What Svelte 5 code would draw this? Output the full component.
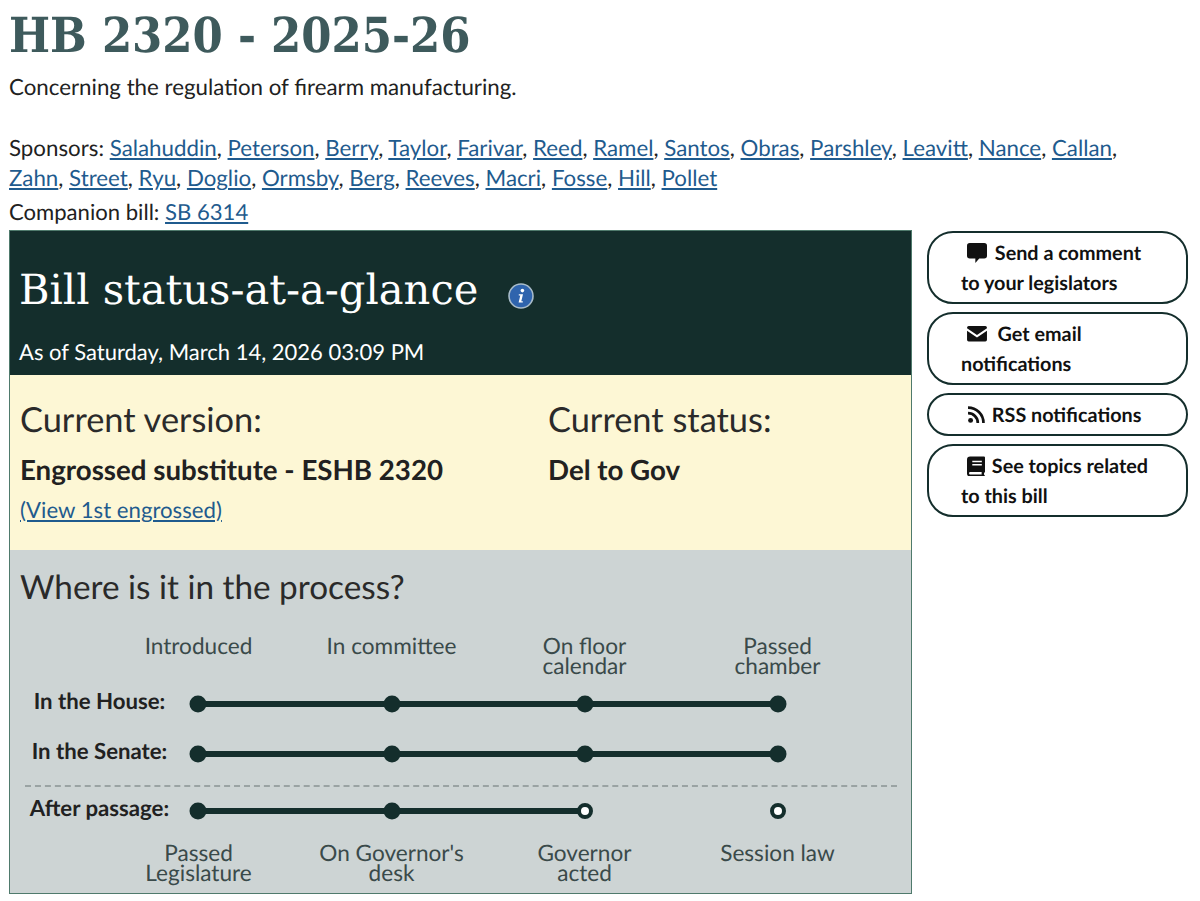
<script>
    let sponsors = ["Salahuddin","Peterson","Berry","Taylor","Farivar","Reed","Ramel","Santos","Obras","Parshley","Leavitt","Nance","Callan","Zahn","Street","Ryu","Doglio","Ormsby","Berg","Reeves","Macri","Fosse","Hill","Pollet"];
    let topStages = [["Introduced"],["In committee"],["On floor","calendar"],["Passed","chamber"]];
    let bottomStages = [["Passed","Legislature"],["On Governor's","desk"],["Governor","acted"],["Session law"]];
    const xs = [9, 203, 396, 589];
</script>

<div class="page">
    <h1>HB 2320 - 2025-26</h1>
    <p class="desc">Concerning the regulation of firearm manufacturing.</p>
    <p class="sponsors">Sponsors: {#each sponsors as s, i}<a href="#top">{s}</a>{i < sponsors.length - 1 ? ", " : ""}{/each}</p>
    <p class="companion">Companion bill: <a href="#top">SB 6314</a></p>

    <div class="columns">
        <div class="status">
            <div class="head">
                <div class="head-title">
                    <h2>Bill status-at-a-glance</h2>
                    <svg class="info" viewBox="0 0 26 26" width="26" height="26">
                        <circle cx="13" cy="13" r="12" fill="#2f64ad" stroke="#a9bcc9" stroke-width="1.6" />
                        <circle cx="14.4" cy="7.6" r="1.8" fill="#fff" />
                        <path d="M10.8 11.2h4.2l-1.7 7h1.5v1.4h-4.2l1.7-7h-1.5z" fill="#fff" />
                    </svg>
                </div>
                <div class="asof">As of Saturday, March 14, 2026 03:09 PM</div>
            </div>

            <div class="current">
                <div class="cur-version">
                    <h3>Current version:</h3>
                    <div class="strong">Engrossed substitute - ESHB 2320</div>
                    <a class="view" href="#top">(View 1st engrossed)</a>
                </div>
                <div class="cur-status">
                    <h3>Current status:</h3>
                    <div class="strong">Del to Gov</div>
                </div>
            </div>

            <div class="process">
                <h3>Where is it in the process?</h3>
                <div class="stages top">
                    {#each topStages as st}
                        <div class="stage">{#each st as l}<div>{l}</div>{/each}</div>
                    {/each}
                </div>
                <div class="row house">
                    <div class="row-label">In the House:</div>
                    <svg class="track" width="620" height="24">
                        <line x1="9" y1="12" x2="589" y2="12" />
                        {#each xs as x}<circle cx={x} cy="12" r="8.5" />{/each}
                    </svg>
                </div>
                <div class="row senate">
                    <div class="row-label">In the Senate:</div>
                    <svg class="track" width="620" height="24">
                        <line x1="9" y1="12" x2="589" y2="12" />
                        {#each xs as x}<circle cx={x} cy="12" r="8.5" />{/each}
                    </svg>
                </div>
                <div class="divider"></div>
                <div class="row after">
                    <div class="row-label">After passage:</div>
                    <svg class="track" width="620" height="24">
                        <line x1="9" y1="12" x2="396" y2="12" />
                        <circle cx="9" cy="12" r="8.5" />
                        <circle cx="203" cy="12" r="8.5" />
                        <circle class="open" cx="396" cy="12" r="6" />
                        <circle class="open" cx="589" cy="12" r="6" />
                    </svg>
                </div>
                <div class="stages bottom">
                    {#each bottomStages as st}
                        <div class="stage">{#each st as l}<div>{l}</div>{/each}</div>
                    {/each}
                </div>
            </div>
        </div>

        <div class="actions">
            <a class="btn" href="#top">
                <span class="line first">
                    <svg viewBox="1 1 18 18" width="20" height="20"><path d="M3.5 1h13A2.5 2.5 0 0 1 19 3.500v9a2.500 2.500 0 0 1-2.500 2.500H12l-3.500 4v-4h-5A2.500 2.500 0 0 1 1 12.500v-9A2.500 2.500 0 0 1 3.500 1z" /></svg>
                    Send a comment
                </span>
                <span class="line">to your legislators</span>
            </a>
            <a class="btn" href="#top">
                <span class="line first">
                    <svg class="mail" viewBox="1 3 18 14" width="20" height="15.500"><path d="M2.500 3h15A1.500 1.500 0 0 1 19 4.500v.6l-9 6-9-6v-.6A1.500 1.500 0 0 1 2.500 3z" /><path d="M1 7.400V15.500A1.500 1.500 0 0 0 2.500 17h15a1.500 1.500 0 0 0 1.500-1.500V7.400l-9 6z" /></svg>
                    &nbsp;Get email
                </span>
                <span class="line">notifications</span>
            </a>
            <a class="btn single" href="#top">
                <span class="line first">
                    <svg viewBox="1 1.500 17.500 17.500" width="18" height="18" class="rss"><circle cx="4.500" cy="15.500" r="2.400" fill="#111" stroke="none" /><path d="M2 8.500a9.500 9.500 0 0 1 9.500 9.500" /><path d="M2 3a15 15 0 0 1 15 15" /></svg>
                    RSS notifications
                </span>
            </a>
            <a class="btn" href="#top">
                <span class="line first">
                    <svg class="book" viewBox="1 1 17 18" width="18" height="20"><path fill-rule="evenodd" d="M4 1h13a1 1 0 0 1 1 1v13.500a1 1 0 0 1-.7.9c-.3.7-.3 1.500 0 2.100.4.200.7.500.7.800a.8.800 0 0 1-.8.700H4a3 3 0 0 1-3-3V4a3 3 0 0 1 3-3zM6 5v1.500h9V5zm0 3v1.500h9V8zM4 15.600c-1.400 0-1.400 2.400 0 2.400h10.900a6 6 0 0 1 0-2.400z" /></svg>
                    See topics related
                </span>
                <span class="line">to this bill</span>
            </a>
        </div>
    </div>
</div>

<style>
    :global(body) {
        background: #fff;
        color: #212121;
        font-family: Lato, sans-serif;
        text-rendering: geometricPrecision;
    }

    .page {
        padding: 0 9px;
        height: 901px;
        overflow: hidden;
        box-sizing: border-box;
    }

    h1 {
        font-family: "DejaVu Serif Condensed", "DejaVu Serif", serif;
        font-weight: 700;
        font-size: 48.3px;
        line-height: 60px;
        color: #3e5a5c;
        margin: 6px 0 0;
    }

    p {
        margin: 0;
    }

    .desc {
        font-size: 22.3px;
        line-height: 30px;
        margin-top: 6px;
    }

    .sponsors {
        font-size: 22.3px;
        line-height: 30px;
        margin-top: 31px;
        width: 1130px;
    }

    .companion {
        font-size: 22.1px;
        line-height: 30px;
        margin-top: 4px;
    }

    a {
        color: #1f5b8e;
        text-decoration: underline;
    }

    .columns {
        display: flex;
        align-items: flex-start;
        gap: 15px;
        margin-top: 3px;
    }

    .status {
        width: 903px;
        box-sizing: border-box;
        border: 1px solid #4f7a6c;
        flex: none;
    }

    .head {
        background: #142e2c;
        color: #fff;
        height: 144px;
        padding: 0 9px;
        box-sizing: border-box;
        overflow: hidden;
    }

    .head-title {
        display: flex;
        align-items: center;
        gap: 30px;
        margin-top: 29px;
    }

    h2 {
        font-family: "DejaVu Serif", serif;
        font-weight: 400;
        font-size: 41.6px;
        line-height: 60px;
        margin: 0;
    }

    .info {
        margin-top: 11px;
    }

    .asof {
        font-size: 22px;
        line-height: 30px;
        margin-top: 17px;
    }

    .current {
        background: #fdf7d5;
        height: 175px;
        padding: 24px 10px 0 10px;
        box-sizing: border-box;
        display: flex;
    }

    .cur-version {
        width: 528px;
    }

    h3 {
        font-weight: 400;
        font-size: 34.4px;
        line-height: 42px;
        margin: 0;
        color: #2a2a2a;
    }

    .process h3 {
        font-size: 33.3px;
    }

    .strong {
        font-weight: 700;
        font-size: 27.7px;
        line-height: 36px;
        margin-top: 11px;
    }

    .view {
        display: block;
        font-size: 22.2px;
        line-height: 30px;
        margin-top: 7px;
    }

    .process {
        background: #cdd4d4;
        padding: 16px 14px 8px 10px;
        height: 343px;
        box-sizing: border-box;
    }

    .stages {
        display: grid;
        grid-template-columns: repeat(4, 193px);
        margin-left: 82px;
        font-size: 22.6px;
        line-height: 20px;
        text-align: center;
        color: #3a4a4a;
    }

    .stages.top {
        margin-top: 28px;
        height: 40px;
    }

    .stages.bottom {
        margin-top: 20px;
    }

    .row {
        display: flex;
        align-items: flex-start;
        height: 24px;
    }

    .house {
        margin-top: 16px;
    }

    .senate {
        margin-top: 26px;
    }

    .after {
        margin-top: 12px;
    }

    .row-label {
        width: 179px;
        margin: -3px 0 0 -10px;
        flex: none;
        text-align: center;
        font-weight: 700;
        font-size: 22.2px;
        line-height: 24px;
    }

    .track line {
        stroke: #142e2c;
        stroke-width: 6;
    }

    .track circle {
        fill: #142e2c;
    }

    .track circle.open {
        fill: #fff;
        stroke: #142e2c;
        stroke-width: 4;
    }

    .divider {
        border-top: 2px dashed #9aa3a3;
        margin: 19px 0 0 5px;
    }

    .actions {
        display: flex;
        flex-direction: column;
        gap: 8px;
        width: 261px;
        flex: none;
        margin-top: 1px;
    }

    .btn {
        display: block;
        border: 2px solid #142e2c;
        border-radius: 26px;
        padding: 4.5px 16px 4.5px 32px;
        color: #111;
        text-decoration: none;
        font-weight: 700;
        font-size: 19.8px;
        line-height: 30px;
    }

    .line {
        display: block;
    }

    .line.first {
        padding-left: 6px;
    }

    .btn svg {
        fill: #111;
        vertical-align: -3px;
        margin-right: 3px;
    }

    .btn svg.mail {
        margin-right: 1px;
        vertical-align: -1px;
    }

    .btn svg.rss {
        fill: none;
        stroke: #111;
        stroke-width: 2.600;
        margin-right: 2px;
        vertical-align: -2px;
    }

    .btn svg.book {
        margin-right: 2px;
    }
</style>
